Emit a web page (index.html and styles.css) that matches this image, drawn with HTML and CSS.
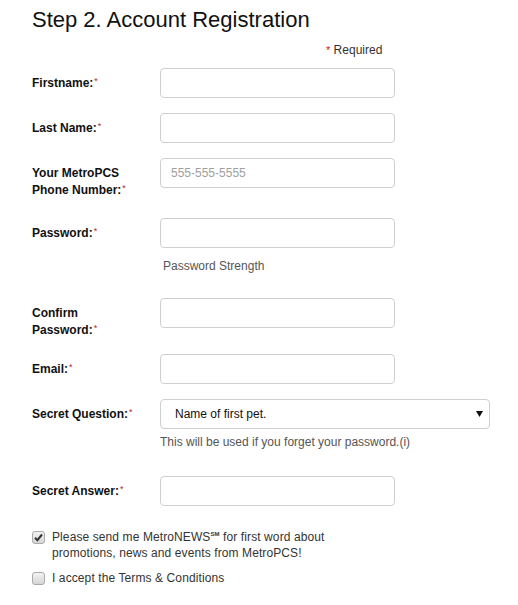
FILE: index.html
```html
<!DOCTYPE html>
<html>
<head>
<meta charset="utf-8">
<link rel="stylesheet" href="styles.css">
</head>
<body>
<div class="page">
  <h1 class="title">Step 2. Account Registration</h1>
  <div class="required-note"><span class="req">*</span> Required</div>

  <div class="row">
    <label class="label">Firstname:<span class="req">*</span></label>
    <div class="field"><input class="input" type="text"></div>
  </div>

  <div class="row">
    <label class="label">Last Name:<span class="req">*</span></label>
    <div class="field"><input class="input" type="text"></div>
  </div>

  <div class="row row-tall">
    <label class="label">Your MetroPCS<br>Phone Number:<span class="req">*</span></label>
    <div class="field"><input class="input" type="text" placeholder="555-555-5555"></div>
  </div>

  <div class="row row-strength">
    <label class="label">Password:<span class="req">*</span></label>
    <div class="field">
      <input class="input" type="password">
      <div class="strength">Password Strength</div>
    </div>
  </div>

  <div class="row row-confirm">
    <label class="label">Confirm<br>Password:<span class="req">*</span></label>
    <div class="field"><input class="input" type="password"></div>
  </div>

  <div class="row">
    <label class="label">Email:<span class="req">*</span></label>
    <div class="field"><input class="input" type="text"></div>
  </div>

  <div class="row row-question">
    <label class="label">Secret Question:<span class="req">*</span></label>
    <div class="field">
      <div class="select-wrap">
        <select class="select">
          <option>Name of first pet.</option>
        </select>
        <svg class="select-arrow" width="7" height="6" viewBox="0 0 7 6"><path d="M0 0H7L3.5 6Z" fill="#111"/></svg>
      </div>
      <div class="hint">This will be used if you forget your password.(i)</div>
    </div>
  </div>

  <div class="row row-answer">
    <label class="label">Secret Answer:<span class="req">*</span></label>
    <div class="field"><input class="input" type="text"></div>
  </div>

  <div class="check-row check-news">
    <span class="box checked">
      <svg width="9" height="9" viewBox="0 0 9 9"><path d="M1 4.8L3.4 7.2L8 1.5" fill="none" stroke="#333" stroke-width="2"/></svg>
    </span>
    <span class="check-text">Please send me MetroNEWS<sup class="sm">SM</sup> for first word about<br>promotions, news and events from MetroPCS!</span>
  </div>

  <div class="check-row">
    <span class="box"></span>
    <span class="check-text">I accept the Terms &amp; Conditions</span>
  </div>
</div>
</body>
</html>
```
FILE: styles.css
```css
html, body {
  margin: 0;
  padding: 0;
  background: #fff;
}

body {
  font-family: "Liberation Sans", Arial, sans-serif;
  color: #222;
}

.page {
  padding: 7px 0 0 32px;
  width: 470px;
}

.title {
  margin: 0;
  font-size: 22px;
  font-weight: normal;
  line-height: 26px;
  color: #111;
}

.required-note {
  margin: 9px 0 0 294px;
  font-size: 12px;
  line-height: 16px;
  color: #333;
}

.req {
  position: relative;
  top: -3px;
  color: #b3262b;
  font-size: 9px;
  line-height: 0;
  font-weight: normal;
  margin-left: 1px;
}

.required-note .req {
  top: 0;
  font-size: 11px;
  margin-left: 0;
}

.row {
  display: grid;
  grid-template-columns: 128px auto;
  align-items: start;
  margin-top: 15px;
}

.required-note + .row {
  margin-top: 10px;
}

.label {
  font-size: 12px;
  font-weight: bold;
  line-height: 17px;
  padding-top: 7px;
  color: #111;
}

.input {
  display: block;
  box-sizing: border-box;
  width: 235px;
  height: 30px;
  margin: 0;
  padding: 0 10px;
  border: 1px solid #cfcfcf;
  border-radius: 4px;
  font-family: "Liberation Sans", Arial, sans-serif;
  font-size: 12px;
  color: #333;
  background: #fff;
  outline: none;
}

.input::placeholder {
  color: #a0a0a0;
}

.row-tall + .row {
  margin-top: 19px;
}

.strength {
  margin: 11px 0 0 3px;
  font-size: 12px;
  line-height: 14px;
  color: #555;
}

.row-strength + .row {
  margin-top: 25px;
}

.row-confirm + .row {
  margin-top: 15px;
}

.select-wrap {
  position: relative;
  width: 330px;
}

.select {
  display: block;
  box-sizing: border-box;
  width: 330px;
  height: 30px;
  margin: 0;
  padding: 0 14px;
  border: 1px solid #cfcfcf;
  border-radius: 4px;
  background: #fff;
  font-family: "Liberation Sans", Arial, sans-serif;
  font-size: 12px;
  color: #111;
  appearance: none;
  -webkit-appearance: none;
  outline: none;
}

.select-arrow {
  position: absolute;
  right: 7px;
  top: 12px;
  pointer-events: none;
}

.hint {
  margin-top: 6px;
  font-size: 12px;
  line-height: 14px;
  color: #555;
}

.row-question + .row {
  margin-top: 27px;
}

.check-row {
  display: flex;
  align-items: flex-start;
  gap: 7px;
  margin-top: 9px;
}

.check-news {
  margin-top: 23px;
}

.box {
  box-sizing: border-box;
  flex: none;
  width: 13px;
  height: 13px;
  margin-top: 2px;
  border: 1px solid #aaa;
  border-radius: 3px;
  background: linear-gradient(#f2f2f2, #d6d6d6);
  display: flex;
  align-items: center;
  justify-content: center;
}

.check-text {
  font-size: 12px;
  line-height: 16px;
  color: #333;
  letter-spacing: 0.1px;
}

.sm {
  font-size: 6px;
  font-weight: bold;
  vertical-align: 5px;
  line-height: 0;
}
```
